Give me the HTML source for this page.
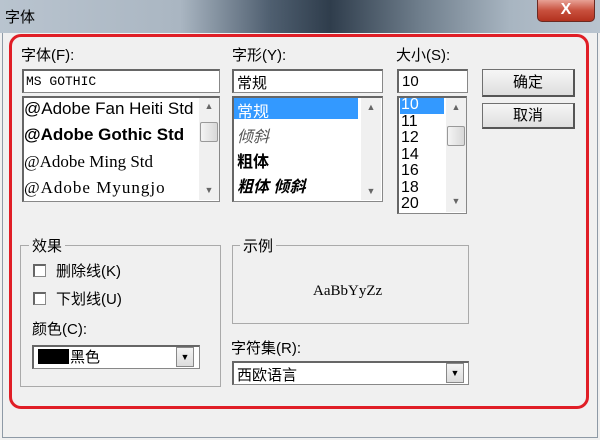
<!DOCTYPE html>
<html><head><meta charset="utf-8"><style>
*{margin:0;padding:0;box-sizing:border-box}
body{width:600px;height:440px;overflow:hidden;background:#f0f0f0;position:relative;font-family:"Liberation Sans","Noto Sans CJK SC",sans-serif;font-size:14px;color:#000}
.a{position:absolute}
.title{left:0;top:0;width:600px;height:33px;background:linear-gradient(90deg,#b9c4cf 0%,#aab6c2 30%,#4f5f70 45%,#2f3d4c 55%,#6f7e8c 70%,#a8b5c1 85%,#b9c4cf 100%)}
.close{left:537px;top:0;width:58px;height:22px;background:linear-gradient(#e7a195,#c8503d 50%,#b3321f);border:1px solid #6b2a22;border-top:none;border-radius:0 0 5px 5px;color:#fff;font-weight:bold;text-align:center;font-size:16px;line-height:20px}
.in{background:#fff;border:1px solid #888;border-top:2px solid #666;border-left:2px solid #666}
.sb{background:#f0f0f0;width:20px}
.arr{font-size:9px;color:#666;width:20px;text-align:center}
.thumb{width:18px;height:20px;background:linear-gradient(90deg,#f4f4f4,#d8d8d8);border:1px solid #999;border-radius:2px}
.btn{background:linear-gradient(#f6f6f6,#dedede);border:1px solid #707070;border-right:2px solid #555;border-bottom:2px solid #555;text-align:center;font-size:15px}
.grp{border:1px solid #aaa}
.lg{background:#f0f0f0;padding:0 3px;font-size:15px}
.cb{width:13px;height:13px;background:#fff;border:1px solid #888;border-top:2px solid #666;border-left:2px solid #666}
.dd{width:18px;height:20px;background:linear-gradient(#f4f4f4,#dcdcdc);border:1px solid #888;font-size:9px;text-align:center;line-height:18px}
</style></head><body>
<div class="a title"></div>
<div class="a" style="left:5px;top:6px;font-size:15px">字体</div>
<div class="a close">X</div>
<div class="a" style="left:2px;top:33px;width:596px;height:405px;border:1px solid #8e9aa6;border-top:none"></div>

<div class="a" style="left:21px;top:44px;font-size:15px">字体(F):</div>
<div class="a in" style="left:22px;top:69px;width:198px;height:24px;font-family:'Liberation Mono',monospace;font-size:13px;padding:3px 2px">MS GOTHIC</div>
<div class="a in" style="left:22px;top:96px;width:198px;height:106px"></div>
<div class="a" style="left:24px;top:99px;font-size:17px;white-space:nowrap;width:174px;overflow:hidden">@Adobe Fan Heiti Std</div>
<div class="a" style="left:24px;top:125px;font-size:17px;font-weight:bold">@Adobe Gothic Std</div>
<div class="a" style="left:24px;top:152px;font-size:17px;font-family:'Liberation Serif',serif">@Adobe Ming Std</div>
<div class="a" style="left:24px;top:178px;font-size:17px;font-family:'Liberation Serif',serif;letter-spacing:1px">@Adobe Myungjo</div>
<div class="a sb" style="left:199px;top:98px;height:102px"></div>
<div class="a arr" style="left:199px;top:101px">▲</div>
<div class="a thumb" style="left:200px;top:122px"></div>
<div class="a arr" style="left:199px;top:185px">▼</div>

<div class="a" style="left:232px;top:44px;font-size:15px">字形(Y):</div>
<div class="a in" style="left:232px;top:69px;width:151px;height:24px;padding:1px 3px;font-size:15px">常规</div>
<div class="a in" style="left:232px;top:96px;width:151px;height:106px"></div>
<div class="a" style="left:234px;top:98px;width:124px;height:21px;background:#3399ff"></div>
<div class="a" style="left:237px;top:98px;font-size:16px;color:#fff">常规</div>
<div class="a" style="left:237px;top:123px;font-size:16px;font-style:italic;color:#555">倾斜</div>
<div class="a" style="left:237px;top:148px;font-size:16px;font-weight:bold">粗体</div>
<div class="a" style="left:237px;top:173px;font-size:16px;font-weight:bold;font-style:italic">粗体 倾斜</div>
<div class="a sb" style="left:361px;top:98px;height:102px"></div>
<div class="a arr" style="left:361px;top:102px">▲</div>
<div class="a arr" style="left:361px;top:186px">▼</div>

<div class="a" style="left:396px;top:44px;font-size:15px">大小(S):</div>
<div class="a in" style="left:397px;top:69px;width:71px;height:24px;padding:2px 3px;font-size:15px">10</div>
<div class="a in" style="left:397px;top:96px;width:70px;height:118px"></div>
<div class="a" style="left:400px;top:98px;width:44px;height:16px;background:#3399ff"></div>
<div class="a" style="left:401px;top:97px;font-size:16px;line-height:16.5px">
<span style="color:#fff">10</span><br>11<br>12<br>14<br>16<br>18<br>20</div>
<div class="a sb" style="left:446px;top:98px;height:114px"></div>
<div class="a arr" style="left:446px;top:102px">▲</div>
<div class="a thumb" style="left:447px;top:126px"></div>
<div class="a arr" style="left:446px;top:196px">▼</div>

<div class="a btn" style="left:482px;top:69px;width:93px;height:28px;line-height:25px">确定</div>
<div class="a btn" style="left:482px;top:103px;width:93px;height:26px;line-height:23px">取消</div>

<div class="a grp" style="left:20px;top:245px;width:201px;height:142px"></div>
<div class="a lg" style="left:29px;top:235px">效果</div>
<div class="a cb" style="left:33px;top:264px"></div>
<div class="a" style="left:56px;top:260px;font-size:15px">删除线(K)</div>
<div class="a cb" style="left:33px;top:292px"></div>
<div class="a" style="left:56px;top:288px;font-size:15px">下划线(U)</div>
<div class="a" style="left:32px;top:318px;font-size:15px">颜色(C):</div>
<div class="a in" style="left:32px;top:345px;width:168px;height:24px"></div>
<div class="a" style="left:38px;top:349px;width:31px;height:15px;background:#000"></div>
<div class="a" style="left:70px;top:346px;font-size:15px">黑色</div>
<div class="a dd" style="left:176px;top:347px">▼</div>

<div class="a grp" style="left:232px;top:245px;width:237px;height:79px"></div>
<div class="a lg" style="left:240px;top:235px">示例</div>
<div class="a" style="left:313px;top:283px;font-family:'Liberation Serif',serif;font-size:15px">AaBbYyZz</div>

<div class="a" style="left:231px;top:337px;font-size:15px">字符集(R):</div>
<div class="a in" style="left:232px;top:361px;width:237px;height:24px;padding:1px 3px;font-size:15px">西欧语言</div>
<div class="a dd" style="left:446px;top:363px">▼</div>

<div class="a" style="left:9px;top:34px;width:580px;height:375px;border:3px solid #e01e26;border-radius:12px"></div>
</body></html>
